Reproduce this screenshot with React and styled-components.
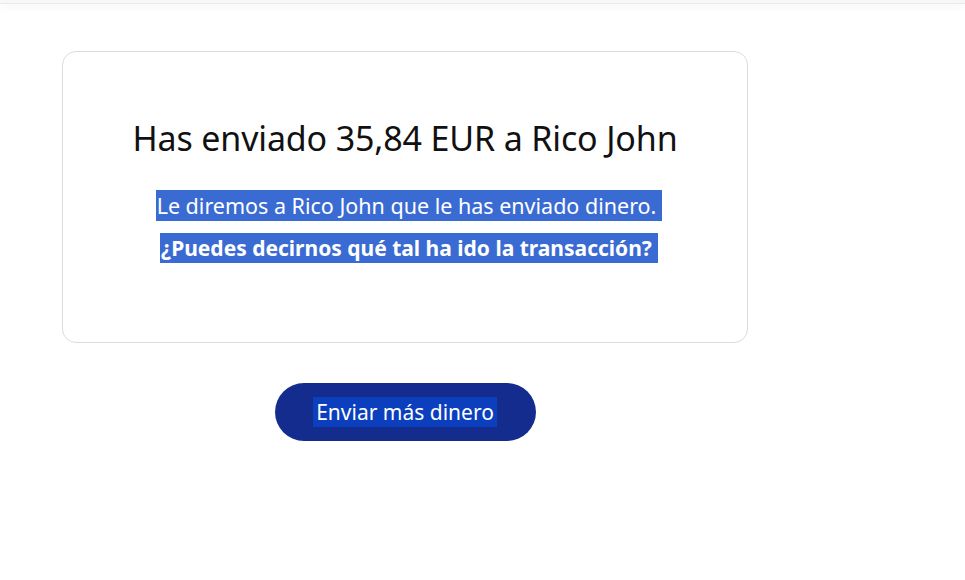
import React from "react";
import styled, { createGlobalStyle } from "styled-components";

const GlobalStyle = createGlobalStyle`
  body {
    margin: 0;
    background: #ffffff;
    font-family: "Noto Sans", "Open Sans", sans-serif;
    color: #111111;
  }
`;

const TopBar = styled.div`
  height: 3px;
  background: #f7f7f7;
  border-bottom: 1px solid #e9e9e9;
  box-shadow: 0 2px 8px rgba(0, 0, 0, 0.06);
`;

const Main = styled.main`
  display: flex;
  flex-direction: column;
  align-items: center;
  width: 686px;
  padding: 47px 0 0 62px;
`;

const Card = styled.section`
  box-sizing: border-box;
  width: 100%;
  height: 292px;
  border: 1px solid #dcdcdc;
  border-radius: 14px;
  padding: 64px 20px 0;
  display: flex;
  flex-direction: column;
  align-items: center;
  text-align: center;
`;

const Title = styled.h1`
  margin: 0 0 31px;
  font-size: 34px;
  font-weight: 400;
  line-height: 44px;
  letter-spacing: -0.15px;
  color: #111111;
`;

const Line = styled.p`
  margin: 0 0 14px;
  padding-left: 8px;
  font-size: ${(p) => (p.$bold ? "21px" : "21.5px")};
  line-height: 29px;
  font-weight: ${(p) => (p.$bold ? 700 : 400)};
  color: #ffffff;
`;

// selected text, the trailing space of the selection widens the right side
const Selected = styled.span`
  background: ${(p) => p.$bg || "#3a6bd3"};
  padding: ${(p) => (p.$even ? "0 3px" : "0 6px 0 1px")};
  padding-top: 1px;
  padding-bottom: 1px;
`;

const Button = styled.button`
  margin-top: 40px;
  width: 261px;
  height: 58px;
  border: none;
  border-radius: 29px;
  background: #142c8e;
  color: #ffffff;
  font-family: inherit;
  font-size: 21px;
  line-height: 30px;
  cursor: pointer;
`;

export default function App() {
  return (
    <>
      <GlobalStyle />
      <TopBar />
      <Main>
        <Card>
          <Title>Has enviado 35,84 EUR a Rico John</Title>
          <Line>
            <Selected>Le diremos a Rico John que le has enviado dinero.</Selected>
          </Line>
          <Line $bold>
            <Selected>¿Puedes decirnos qué tal ha ido la transacción?</Selected>
          </Line>
        </Card>
        <Button>
          <Selected $even $bg="#0b3fbd">Enviar más dinero</Selected>
        </Button>
      </Main>
    </>
  );
}
